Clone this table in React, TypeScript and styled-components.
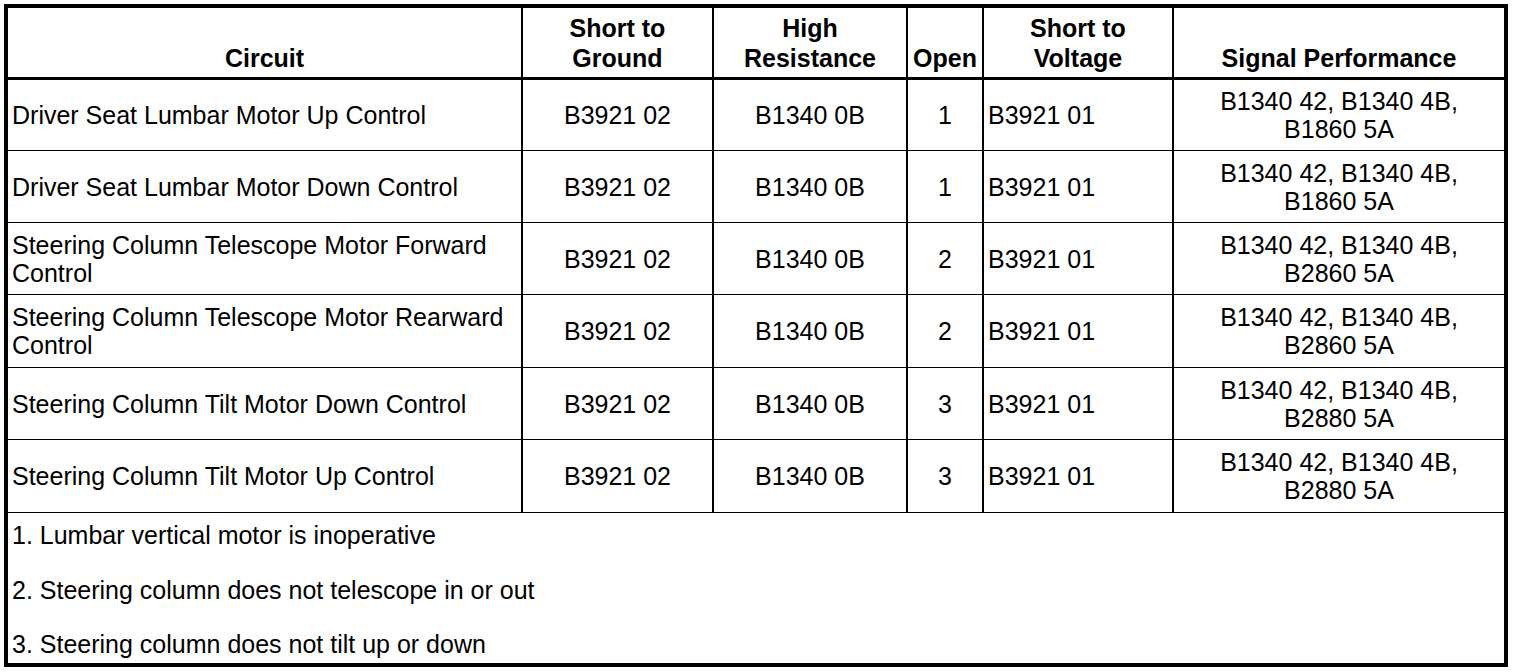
import React from "react";
import styled, { createGlobalStyle } from "styled-components";

const Global = createGlobalStyle`
  html, body { margin: 0; padding: 0; background: #fff; }
  body { font-family: "Liberation Sans", Arial, sans-serif; color: #000; }
`;

const Page = styled.div`
  padding: 4px;
`;

const Table = styled.div`
  display: grid;
  grid-template-columns: 513px 189px 192px 74px 188px 330px;
  grid-template-rows: 71px 70px 71px 71px 72px 71px 72px 150px;
  column-gap: 2px;
  row-gap: 1px;
  width: 1496px;
  border: 4px solid #000;
  background: #000;
  font-size: 25px;
`;

const HeadCell = styled.div`
  background: #fff;
  margin-bottom: 2px;
  display: flex;
  align-items: flex-end;
  justify-content: center;
  text-align: center;
  font-weight: bold;
  line-height: 30px;
  padding-bottom: 4px;
  white-space: nowrap;
`;

const Cell = styled.div<{ $align?: "left" | "center" }>`
  background: #fff;
  display: flex;
  align-items: center;
  justify-content: ${(p) => (p.$align === "left" ? "flex-start" : "center")};
  text-align: ${(p) => (p.$align === "left" ? "left" : "center")};
  line-height: 28px;
  padding: 0 4px;
`;

const Notes = styled.div`
  grid-column: 1 / -1;
  background: #fff;
  display: flex;
  flex-direction: column;
  gap: 26.5px;
  padding: 8px 4px 0;
  line-height: 28px;
`;

const Note = styled.div``;

type Row = {
  circuit: string;
  open: string;
  signal: [string, string];
};

const rows: Row[] = [
  { circuit: "Driver Seat Lumbar Motor Up Control", open: "1", signal: ["B1340 42, B1340 4B,", "B1860 5A"] },
  { circuit: "Driver Seat Lumbar Motor Down Control", open: "1", signal: ["B1340 42, B1340 4B,", "B1860 5A"] },
  { circuit: "Steering Column Telescope Motor Forward Control", open: "2", signal: ["B1340 42, B1340 4B,", "B2860 5A"] },
  { circuit: "Steering Column Telescope Motor Rearward Control", open: "2", signal: ["B1340 42, B1340 4B,", "B2860 5A"] },
  { circuit: "Steering Column Tilt Motor Down Control", open: "3", signal: ["B1340 42, B1340 4B,", "B2880 5A"] },
  { circuit: "Steering Column Tilt Motor Up Control", open: "3", signal: ["B1340 42, B1340 4B,", "B2880 5A"] },
];

export default function App() {
  return (
    <>
      <Global />
      <Page>
        <Table>
          <HeadCell>Circuit</HeadCell>
          <HeadCell>
            Short to
            <br />
            Ground
          </HeadCell>
          <HeadCell>
            High
            <br />
            Resistance
          </HeadCell>
          <HeadCell>Open</HeadCell>
          <HeadCell>
            Short to
            <br />
            Voltage
          </HeadCell>
          <HeadCell>Signal Performance</HeadCell>
          {rows.map((r) => (
            <React.Fragment key={r.circuit}>
              <Cell $align="left">{r.circuit}</Cell>
              <Cell>B3921 02</Cell>
              <Cell>B1340 0B</Cell>
              <Cell>{r.open}</Cell>
              <Cell $align="left">B3921 01</Cell>
              <Cell>
                {r.signal[0]}
                <br />
                {r.signal[1]}
              </Cell>
            </React.Fragment>
          ))}
          <Notes>
            <Note>1. Lumbar vertical motor is inoperative</Note>
            <Note>2. Steering column does not telescope in or out</Note>
            <Note>3. Steering column does not tilt up or down</Note>
          </Notes>
        </Table>
      </Page>
    </>
  );
}
